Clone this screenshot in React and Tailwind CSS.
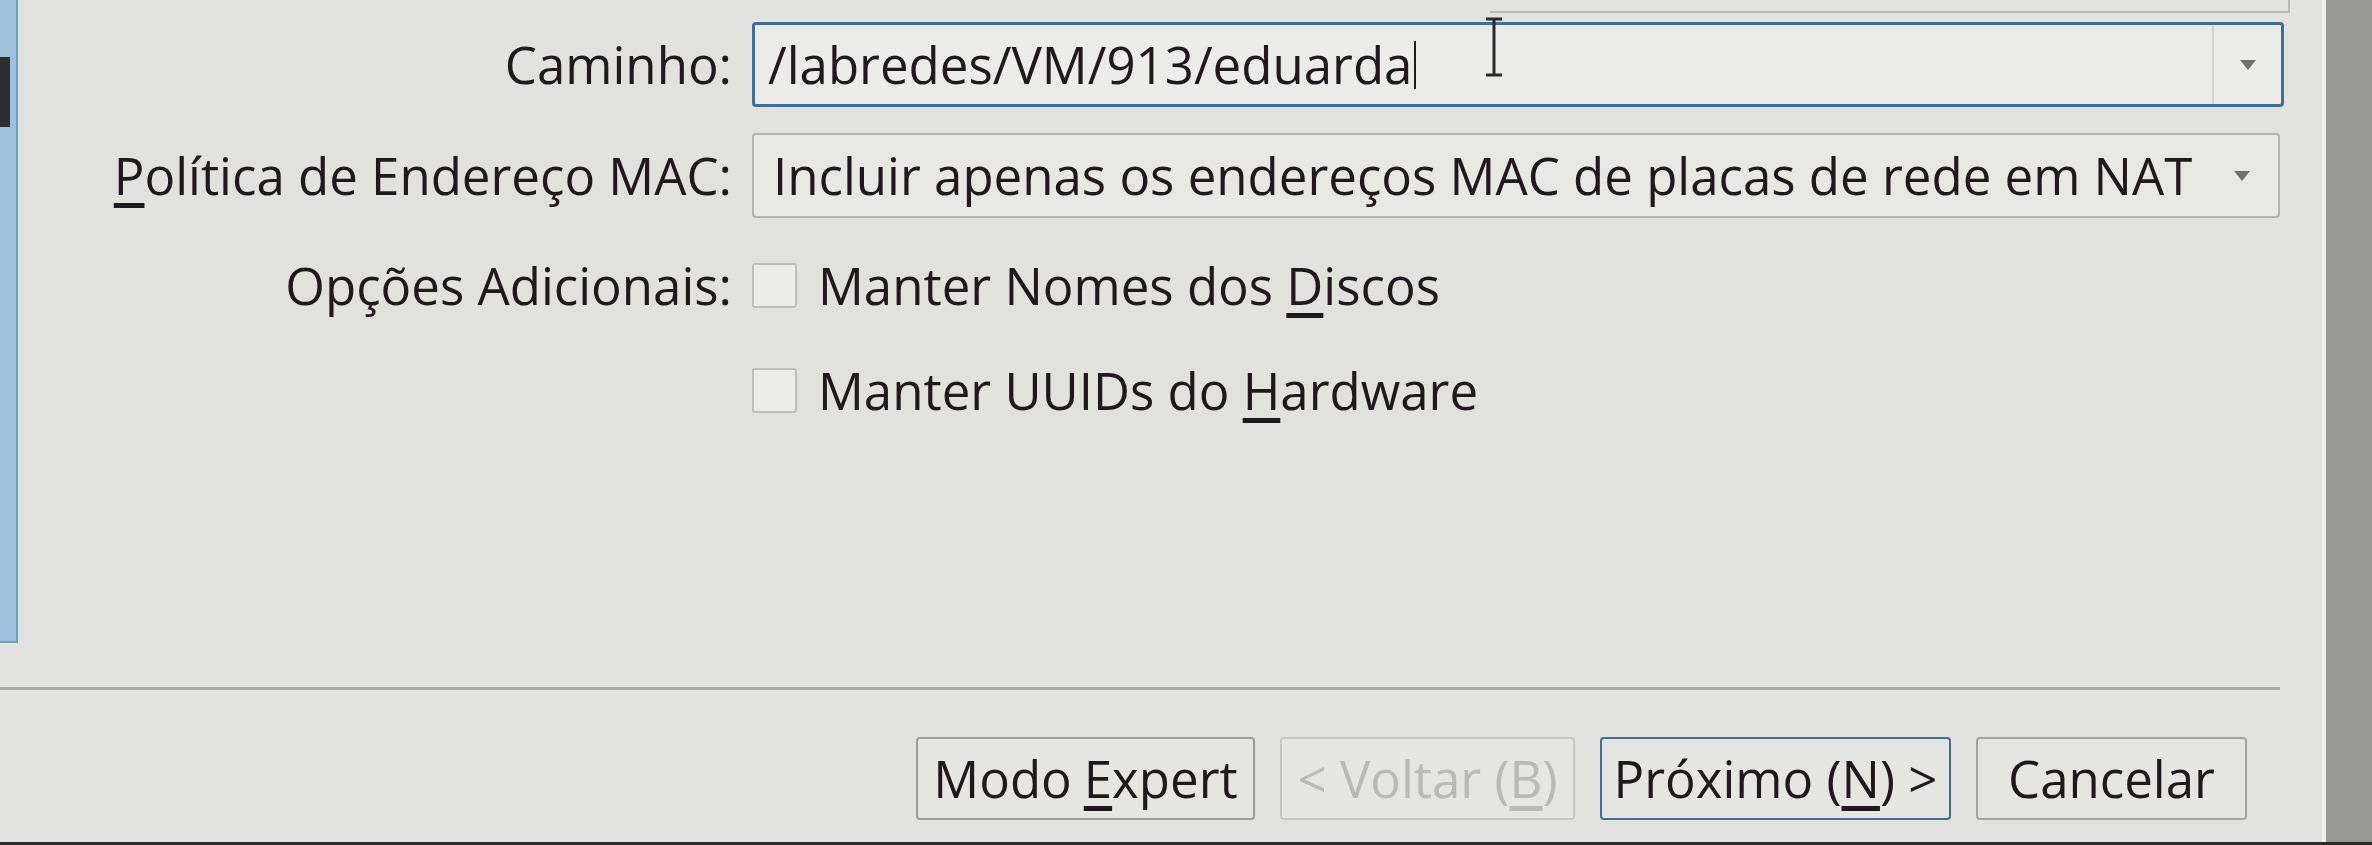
const Arrow = () => (
  <svg width="20" height="12" viewBox="0 0 20 12">
    <path d="M2 1 L18 1 L10 11 Z" fill="#6f6f6d" />
  </svg>
);

const Checkbox = ({ children }) => (
  <div className="flex items-center gap-[21px]">
    <div className="h-[45px] w-[45px] rounded-[3px] border-2 border-[#bdbdba] bg-[#ebebe9]" />
    <span>{children}</span>
  </div>
);

const Button = ({ w, className = "", children }) => (
  <button
    className={`flex h-[83px] items-center justify-center rounded-[4px] border-2 bg-[#e5e5e2] ${w} ${className}`}
  >
    {children}
  </button>
);

export default function App() {
  return (
    <div className="flex h-[845px] w-[2372px] flex-col overflow-hidden bg-[#e1e1de] font-['Open_Sans',sans-serif] text-[51px] leading-none text-[#1f191d]">
      <div className="flex h-[842px]">
        <div className="flex flex-1 flex-col">
          <div className="flex h-[687px]">
            {/* lista lateral cortada */}
            <div className="w-[18px]">
              <div className="h-[643px] border-b-2 border-r-2 border-[#6f9fc7] bg-[#9ec0db] pt-[57px]">
                <div className="h-[70px] w-[10px] bg-[#2e2e2e]" />
              </div>
            </div>

            <div className="flex flex-1 flex-col">
              <div className="ml-[1472px] mr-[32px] h-[13px] border-b-2 border-r-2 border-[#b7b7b4]" />

              <div className="mt-[9px] flex items-center">
                <div className="w-[714px] text-right">Caminho:</div>
                <div className="relative ml-[20px] mr-[38px] flex h-[85px] flex-1 items-center rounded-[4px] border-[3px] border-[#3f6f98] bg-[#ebebe9]">
                  <div className="flex flex-1 items-center pl-[13px]">
                    <span>/labredes/VM/913/eduarda</span>
                    <span className="ml-[2px] h-[48px] w-[2px] bg-[#1c1c1c]" />
                  </div>
                  <div className="flex h-full w-[69px] items-center justify-center border-l-2 border-[#d2d2cf]">
                    <Arrow />
                  </div>
                  <svg
                    className="absolute left-[728px] top-[-8px]"
                    width="22"
                    height="60"
                    viewBox="0 0 22 60"
                  >
                    <path
                      d="M3 2 H19 M11 2 V58 M3 58 H19"
                      stroke="#2a2a2a"
                      strokeWidth="3"
                      fill="none"
                    />
                  </svg>
                </div>
              </div>

              <div className="mt-[26px] flex items-center">
                <div className="w-[714px] text-right">
                  <u className="underline-offset-[8px]">P</u>olítica de Endereço MAC:
                </div>
                <div className="ml-[20px] mr-[42px] flex h-[85px] flex-1 items-center justify-between rounded-[4px] border-2 border-[#b3b3b0] bg-[#e7e7e4] pl-[19px] pr-[26px]">
                  <span>Incluir apenas os endereços MAC de placas de rede em NAT</span>
                  <Arrow />
                </div>
              </div>

              <div className="mt-[39px] flex h-[56px] items-center">
                <div className="w-[714px] text-right">Opções Adicionais:</div>
                <div className="ml-[20px]">
                  <Checkbox>
                    Manter Nomes dos <u className="underline-offset-[8px]">D</u>iscos
                  </Checkbox>
                </div>
              </div>

              <div className="mt-[49px] flex h-[56px] items-center">
                <div className="ml-[734px]">
                  <Checkbox>
                    Manter UUIDs do <u className="underline-offset-[8px]">H</u>ardware
                  </Checkbox>
                </div>
              </div>
            </div>
          </div>

          <div className="mr-[42px] h-[3px] bg-[#a9a9a6]" />

          <div className="flex justify-end gap-[25px] pr-[75px] pt-[47px]">
            <Button w="w-[339px]" className="border-[#9c9c99]">
              Modo <u className="ml-[12px] underline-offset-[8px]">E</u>xpert
            </Button>
            <Button w="w-[295px]" className="border-[#c6c6c3] text-[#b9b9b6]">
              &lt; Voltar (<u className="underline-offset-[8px]">B</u>)
            </Button>
            <Button w="w-[351px]" className="border-[#3f6f98]">
              Próximo (<u className="underline-offset-[8px]">N</u>) &gt;
            </Button>
            <Button w="w-[271px]" className="border-[#a3a3a0]">
              Cancelar
            </Button>
          </div>
        </div>

        <div className="w-[50px] border-l-4 border-[#eef0f0] bg-[#999997]" />
      </div>
      <div className="h-[3px] bg-[#2b2b2b]" />
    </div>
  );
}
